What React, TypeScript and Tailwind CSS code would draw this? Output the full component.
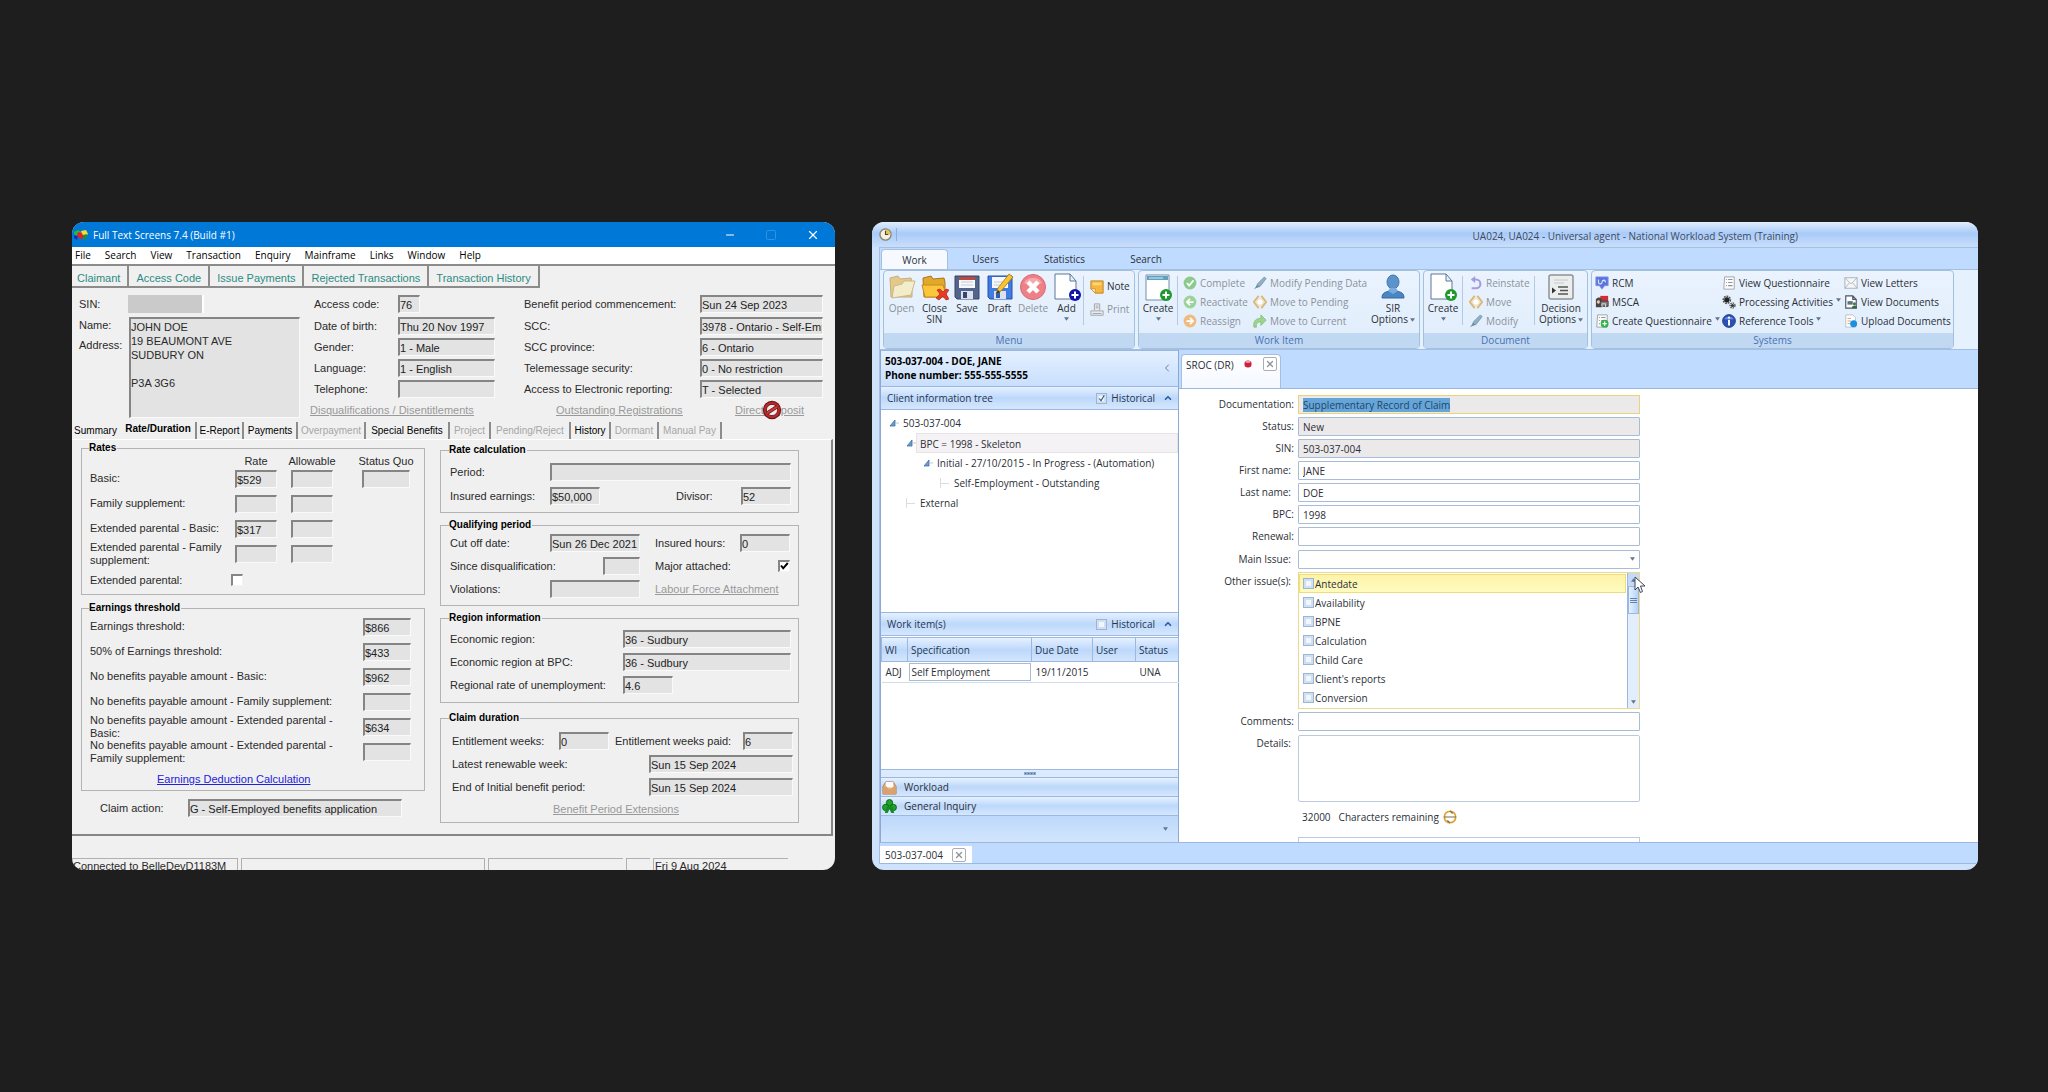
import type { ReactNode } from "react";
import clsx from "clsx";
import { ChevronLeft, ChevronUp, Minus, Square, X } from "lucide-react";

/* ---------- Full Text Screens ---------- */

type FieldProps = { id: string; value?: string; className?: string };

const Field = ({ id, value = "", className }: FieldProps) => (
  <input
    id={id}
    readOnly
    defaultValue={value}
    className={clsx(
      "h-[18px] shrink-0 border-t-2 border-l-2 border-r border-b border-t-[#858585] border-l-[#858585] border-r-[#fafafa] border-b-[#fafafa] bg-[#e3e3e3] pt-px text-[11px] text-[#222] outline-none",
      className,
    )}
  />
);

const Label = ({ id, children, className }: { id: string; children: ReactNode; className?: string }) => (
  <label htmlFor={id} className={clsx("shrink-0 whitespace-nowrap", className)}>
    {children}
  </label>
);

const Group = ({ title, children, className }: { title: string; children: ReactNode; className?: string }) => (
  <fieldset className={clsx("min-w-0 border border-[#b4b4b4]", className)}>
    <legend className="-ml-px pr-px text-[10px] leading-3 font-bold text-black">{title}</legend>
    {children}
  </fieldset>
);

const ClassicCheckbox = ({ id, checked = false, className }: { id: string; checked?: boolean; className?: string }) => (
  <span className={clsx("relative block size-3 shrink-0", className)}>
    <input
      id={id}
      type="checkbox"
      defaultChecked={checked}
      className="block size-3 appearance-none border-t-2 border-l-2 border-r border-b border-t-[#858585] border-l-[#858585] border-[#f4f4f4] bg-white"
    />
    {checked && (
      <svg viewBox="0 0 12 12" className="pointer-events-none absolute inset-0 size-3">
        <path d="M3 5.5l2.2 2.8L9.8 3" fill="none" stroke="#000" strokeWidth="2" />
      </svg>
    )}
  </span>
);

const menus = ["File", "Search", "View", "Transaction", "Enquiry", "Mainframe", "Links", "Window", "Help"];

const shortcuts = ["Claimant", "Access Code", "Issue Payments", "Rejected Transactions", "Transaction History"];

const claimTabs = [
  { name: "Summary", width: "w-[49px]" },
  { name: "Rate/Duration", width: "w-[76px]", active: true },
  { name: "E-Report", width: "w-[47px]" },
  { name: "Payments", width: "w-[54px]" },
  { name: "Overpayment", width: "w-[68px]", disabled: true },
  { name: "Special Benefits", width: "w-[84px]" },
  { name: "Project", width: "w-[41px]", disabled: true },
  { name: "Pending/Reject", width: "w-[80px]", disabled: true },
  { name: "History", width: "w-[40px]" },
  { name: "Dormant", width: "w-[48px]", disabled: true },
  { name: "Manual Pay", width: "w-[63px]", disabled: true },
];

const personal = [
  { id: "access", label: "Access code:", value: "76", width: "w-[22px]" },
  { id: "dob", label: "Date of birth:", value: "Thu 20 Nov 1997", width: "w-[97px]" },
  { id: "gender", label: "Gender:", value: "1 - Male", width: "w-[97px]" },
  { id: "language", label: "Language:", value: "1 - English", width: "w-[97px]" },
  { id: "phone", label: "Telephone:", value: "", width: "w-[97px]" },
];

const claim = [
  { id: "bpc", label: "Benefit period commencement:", value: "Sun 24 Sep 2023" },
  { id: "scc", label: "SCC:", value: "3978 - Ontario - Self-Employed" },
  { id: "sccprov", label: "SCC province:", value: "6 - Ontario" },
  { id: "tele", label: "Telemessage security:", value: "0 - No restriction" },
  { id: "aer", label: "Access to Electronic reporting:", value: "T - Selected" },
];

const rates = [
  { id: "basic", label: "Basic:", rate: "$529", quo: true },
  { id: "family", label: "Family supplement:", rate: "" },
  { id: "extbasic", label: "Extended parental - Basic:", rate: "$317" },
  { id: "extfamily", label: "Extended parental - Family supplement:", rate: "" },
];

const thresholds = [
  { id: "et", label: "Earnings threshold:", value: "$866" },
  { id: "et50", label: "50% of Earnings threshold:", value: "$433" },
  { id: "nbbasic", label: "No benefits payable amount - Basic:", value: "$962" },
  { id: "nbfamily", label: "No benefits payable amount - Family supplement:", value: "" },
  { id: "nbext", label: "No benefits payable amount - Extended parental - Basic:", value: "$634" },
  { id: "nbextfam", label: "No benefits payable amount - Extended parental - Family supplement:", value: "" },
];

const NoEntry = () => (
  <svg viewBox="0 0 20 20" className="absolute -top-[3px] left-[27px] size-5">
    <circle cx="10" cy="10" r="9.2" fill="#6f1518" />
    <circle cx="10" cy="10" r="8" fill="#b9292b" />
    <circle cx="10" cy="10" r="5.6" fill="#f1ebe9" stroke="#5d1012" strokeWidth=".8" />
    <path d="M5 13.2L15 6.8" stroke="#6c1214" strokeWidth="3.4" />
    <path d="M5 13.2L15 6.8" stroke="#c9383a" strokeWidth="2" />
  </svg>
);

const ClaimantDetails = () => (
  <section className="flex pt-[7px] pr-[12px] pl-[7px]">
    <div className="flex w-[221px] flex-col">
      <div className="flex h-[18px] items-center">
        <Label id="sin" className="w-[49px]">SIN:</Label>
        <input id="sin" readOnly className="h-[18px] w-[76px] border-r-2 border-r-white bg-[#cacaca] outline-none" />
      </div>
      <div className="mt-[4px] flex">
        <div className="w-[50px]">
          <Label id="address" className="block leading-[16px]">Name:</Label>
          <Label id="address" className="mt-[4px] block leading-[16px]">Address:</Label>
        </div>
        <textarea
          id="address"
          readOnly
          defaultValue={"JOHN DOE\n19 BEAUMONT AVE\nSUDBURY ON\n\nP3A 3G6"}
          className="block h-[101px] w-[171px] resize-none overflow-hidden border-t-2 border-l-2 border-r border-b border-t-[#858585] border-l-[#858585] border-[#fafafa] bg-[#e3e3e3] pt-px leading-[14px] outline-none"
        />
      </div>
    </div>
    <div className="ml-[10px] flex flex-1 flex-col">
      <div className="flex justify-between pl-1">
        <div className="flex flex-col gap-[3px]">
          {personal.map((f) => (
            <div key={f.id} className="flex items-center first:mb-px">
              <Label id={f.id} className="w-[84px]">{f.label}</Label>
              <Field id={f.id} value={f.value} className={f.width} />
            </div>
          ))}
        </div>
        <div className="flex flex-col gap-[3px]">
          {claim.map((f) => (
            <div key={f.id} className="flex items-center first:mb-px">
              <Label id={f.id} className="w-[176px]">{f.label}</Label>
              <Field id={f.id} value={f.value} className="w-[123px]" />
            </div>
          ))}
        </div>
      </div>
      <div className="mt-[5px] flex whitespace-nowrap text-[#999] underline">
        <a href="#" className="w-[246px]">Disqualifications / Disentitlements</a>
        <a href="#" className="w-[179px]">Outstanding Registrations</a>
        <span className="relative">
          <a href="#">Direct Deposit</a>
          <NoEntry />
        </span>
      </div>
    </div>
  </section>
);

const RatesGroup = () => (
  <Group title="Rates" className="pr-[14px] pb-px pl-2">
    <div className="grid h-3 grid-cols-[1fr_56px_71px_48px] items-center">
      <span />
      {["Rate", "Allowable"].map((h) => (
        <span key={h} className="flex w-[42px] justify-center whitespace-nowrap">{h}</span>
      ))}
      <span className="flex justify-center whitespace-nowrap">Status Quo</span>
    </div>
    {rates.map((r) => (
      <div key={r.id} className="grid h-[25px] grid-cols-[1fr_56px_71px_48px] items-center">
        <label htmlFor={r.id} className="leading-[13px]">{r.label}</label>
        <Field id={r.id} value={r.rate} className="w-[42px]" />
        <Field id={`${r.id}-allow`} className="w-[42px]" />
        {r.quo && <Field id={`${r.id}-quo`} className="w-[48px]" />}
      </div>
    ))}
    <div className="flex h-[27px] items-center">
      <Label id="extparental" className="w-[141px]">Extended parental:</Label>
      <ClassicCheckbox id="extparental" />
    </div>
  </Group>
);

const ThresholdGroup = () => (
  <Group title="Earnings threshold" className="mt-[7px] pr-[13px] pl-2">
    {thresholds.map((t) => (
      <div key={t.id} className="flex h-[25px] items-center justify-between">
        <label htmlFor={t.id} className="w-[255px] leading-[13px]">{t.label}</label>
        <Field id={t.id} value={t.value} className="w-[48px]" />
      </div>
    ))}
    <div className="flex h-[26px] items-center pt-1 pl-[67px]">
      <a href="#" className="text-[#2222dd] underline">Earnings Deduction Calculation</a>
    </div>
  </Group>
);

const RightGroups = () => (
  <div className="flex w-[359px] flex-col pt-[4px]">
    <Group title="Rate calculation" className="pt-[7px] pr-[7px] pb-[7px] pl-[9px]">
      <div className="flex items-center">
        <Label id="period" className="w-[100px]">Period:</Label>
        <Field id="period" className="w-[241px]" />
      </div>
      <div className="mt-[6px] flex items-center">
        <Label id="insearn" className="w-[100px]">Insured earnings:</Label>
        <Field id="insearn" value="$50,000" className="w-[50px]" />
        <Label id="divisor" className="ml-auto w-[65px]">Divisor:</Label>
        <Field id="divisor" value="52" className="w-[50px]" />
      </div>
    </Group>
    <Group title="Qualifying period" className="mt-[6px] pt-[3px] pr-[8px] pb-[7px] pl-[9px]">
      <div className="flex items-center">
        <Label id="cutoff" className="w-[100px]">Cut off date:</Label>
        <Field id="cutoff" value="Sun 26 Dec 2021" className="w-[90px]" />
        <Label id="inshours" className="ml-auto w-[85px]">Insured hours:</Label>
        <Field id="inshours" value="0" className="w-[50px]" />
      </div>
      <div className="mt-[5px] flex items-center">
        <Label id="since" className="w-[153px]">Since disqualification:</Label>
        <Field id="since" className="w-[37px]" />
        <Label id="major" className="ml-auto w-[123px]">Major attached:</Label>
        <ClassicCheckbox id="major" checked />
      </div>
      <div className="mt-[5px] flex items-center">
        <Label id="violations" className="w-[100px]">Violations:</Label>
        <Field id="violations" className="w-[90px]" />
        <a href="#" className="ml-auto w-[135px] whitespace-nowrap text-[#999] underline">Labour Force Attachment</a>
      </div>
    </Group>
    <Group title="Region information" className="mt-[6px] pt-[6px] pr-[7px] pb-[8px] pl-[9px]">
      <div className="flex items-center">
        <Label id="region" className="w-[173px]">Economic region:</Label>
        <Field id="region" value="36 - Sudbury" className="w-[168px]" />
      </div>
      <div className="mt-[5px] flex items-center">
        <Label id="regionbpc" className="w-[173px]">Economic region at BPC:</Label>
        <Field id="regionbpc" value="36 - Sudbury" className="w-[168px]" />
      </div>
      <div className="mt-[5px] flex items-center">
        <Label id="unemp" className="w-[173px]">Regional rate of unemployment:</Label>
        <Field id="unemp" value="4.6" className="w-[50px]" />
      </div>
    </Group>
    <Group title="Claim duration" className="mt-[9px] pt-[8px] pr-[5px] pb-[6px] pl-[9px]">
      <div className="flex items-center pl-[2px]">
        <Label id="entweeks" className="w-[107px]">Entitlement weeks:</Label>
        <Field id="entweeks" value="0" className="w-[50px]" />
        <Label id="entpaid" className="ml-auto w-[128px]">Entitlement weeks paid:</Label>
        <Field id="entpaid" value="6" className="w-[50px]" />
      </div>
      <div className="mt-[5px] flex items-center pl-[2px]">
        <Label id="latest" className="flex-1">Latest renewable week:</Label>
        <Field id="latest" value="Sun 15 Sep 2024" className="w-[144px]" />
      </div>
      <div className="mt-[5px] flex items-center pl-[2px]">
        <Label id="endinit" className="flex-1">End of Initial benefit period:</Label>
        <Field id="endinit" value="Sun 15 Sep 2024" className="w-[144px]" />
      </div>
      <a href="#" className="mt-[6px] ml-[103px] block leading-[14px] text-[#999] underline">
        Benefit Period Extensions
      </a>
    </Group>
  </div>
);

const FullTextScreens = () => (
  <section className="flex min-w-0 flex-[763] flex-col overflow-hidden rounded-xl bg-[#f0f0f0] font-['Liberation_Sans',Arial,sans-serif] text-[11px] leading-[14px] text-[#2a2a2a]">
    <header className="flex h-[25px] items-center bg-[#0078d7] pr-[15px] pl-px text-white">
      <svg viewBox="0 0 16 12" className="h-3 w-4">
        <path d="M1 3l4-2 3 2-2 4-4 1z" fill="#2ab83c" />
        <path d="M8 2l5-1 2 4-3 3-3-2z" fill="#f4e02e" />
        <path d="M5 3l4 1 2 5-4 1-3-4z" fill="#e3202b" />
        <path d="M10 6l4-1-1 5-3 1z" fill="#1c8f3a" />
        <path d="M1 6l4 1-1 4-3-2z" fill="#1a2fae" />
      </svg>
      <h1 className="ml-1 font-['Open_Sans',sans-serif] text-[10px]">Full Text Screens 7.4 (Build #1)</h1>
      <div className="ml-auto flex items-center gap-[29px]">
        <button aria-label="Minimize"><Minus className="size-3" strokeWidth={2} /></button>
        <button aria-label="Maximize"><Square className="size-3 text-[#2f92e2]" strokeWidth={2} /></button>
        <button aria-label="Close"><X className="size-[14px]" strokeWidth={2} /></button>
      </div>
    </header>
    <nav className="flex h-[19px] items-center gap-[14px] border-b-2 border-[#8c8c8c] bg-white pl-[3px] font-['Open_Sans',sans-serif] text-[10px] leading-[13px] text-black">
      {menus.map((m) => (
        <button key={m}>{m}</button>
      ))}
    </nav>
    <nav className="flex">
      {shortcuts.map((s) => (
        <button
          key={s}
          className="h-[22px] border-r-2 border-b-2 border-[#8c8c8c] px-[7px] pt-[3px] whitespace-nowrap text-[#2d8b84] first:pl-[5px]"
        >
          {s}
        </button>
      ))}
    </nav>
    <ClaimantDetails />
    <div className="mt-1 flex" role="tablist">
      {claimTabs.map((t) => (
        <button
          key={t.name}
          role="tab"
          aria-selected={Boolean(t.active)}
          className={clsx(
            "flex h-[17px] shrink-0 items-center justify-center border-r-2 text-[10px] whitespace-nowrap",
            t.width,
            t.name === "Summary" ? "border-[#f0f0f0]" : "border-[#8c8c8c]",
            t.active && "pb-1 font-bold",
            t.disabled ? "text-[#a6a6a6]" : "text-black",
          )}
        >
          {t.name}
        </button>
      ))}
    </div>
    <main className="mr-[2px] flex justify-between border-t border-r-2 border-b-2 border-t-white border-r-[#858585] border-b-[#858585] pr-[32px] pb-[11px] pl-[9px]">
      <div className="flex w-[344px] flex-col pt-[2px]">
        <RatesGroup />
        <ThresholdGroup />
        <div className="mt-2 flex items-center pl-[19px]">
          <Label id="claimaction" className="w-[88px]">Claim action:</Label>
          <Field id="claimaction" value="G - Self-Employed benefits application" className="w-[214px]" />
        </div>
      </div>
      <RightGroups />
    </main>
    <footer className="mt-auto flex h-3 gap-[3px] overflow-hidden whitespace-nowrap [&>span]:h-4 [&>span]:border-t [&>span]:border-l [&>span]:border-[#b0b0b0]">
      <span className="w-[166px] border-r border-r-white">Connected to BelleDevD1183M</span>
      <span className="w-[244px] border-r border-r-white" />
      <span className="w-[135px]" />
      <span className="w-[24px]" />
      <span className="w-[135px] pl-px">Fri 9 Aug 2024</span>
    </footer>
  </section>
);

/* ---------- National Workload System ---------- */

const glossy = "bg-linear-to-b from-[#e6f1ff] from-0% via-[#bdd8fb] via-50% to-[#d6e7fe]";

const Svg = ({ box = 16, className, children }: { box?: number; className?: string; children: ReactNode }) => (
  <svg viewBox={`0 0 ${box} ${box}`} className={clsx("shrink-0", className ?? "size-[14px]")} fill="none">
    {children}
  </svg>
);

const Folder = ({ open = false }: { open?: boolean }) => (
  <Svg box={28} className="size-7">
    <g opacity={open ? 0.55 : 1}>
      <path d="M2 5l8-2 2 3 11-1 1 4v15H3z" fill="#e0a92c" stroke="#a9771a" />
      {open ? (
        <path d="M6 13l8-2 2-3h11l-4 14-19 3z" fill="#fbe9a0" stroke="#b58a2c" />
      ) : (
        <path d="M1 12h21l4 12H4z" fill="#fbc53c" stroke="#c98a17" />
      )}
    </g>
    {!open && <path d="M16 17l3-1 3 3 3-3 3 1-3 4 3 5-3 1-3-4-4 4-3-2 4-4z" fill="#e8392b" stroke="#a3170f" strokeWidth=".6" />}
  </Svg>
);

const Floppy = ({ pencil = false }: { pencil?: boolean }) => (
  <Svg box={28} className="size-7">
    <path d="M2 3h24v23H4l-2-2z" fill={pencil ? "#3f7de0" : "#51648c"} stroke={pencil ? "#2451a8" : "#37466a"} />
    <path d="M6 4h16v11H6z" fill="#f6f8fb" />
    {!pencil && <path d="M6 4h16v3H6z" fill="#c2483e" />}
    <path d="M8 9h12M8 12h12" stroke="#c3cbd8" />
    <path d="M8 18h12v8H8z" fill="#dbe2ee" />
    <path d="M10 19h4v6h-4z" fill={pencil ? "#2c5dba" : "#37466a"} />
    {pencil && (
      <>
        <path d="M23 1l4 3-12 14-5 3 2-6z" fill="#f7c531" stroke="#a8730d" strokeWidth=".8" />
        <path d="M10 21l2-4 2 2z" fill="#333" />
      </>
    )}
  </Svg>
);

const Page = ({ badge, wide = false }: { badge: string; wide?: boolean }) => (
  <Svg box={28} className="size-7">
    {wide ? (
      <>
        <path d="M2 2h23v25H2z" fill="#fff" stroke="#6f8fae" />
        <path d="M3 3h21v4H3z" fill="#5fa0bd" />
        <path d="M5 5h14" stroke="#d4ecf4" />
      </>
    ) : (
      <path d="M2 1h15l6 7v18H2zM17 1v7h6" fill="#fff" stroke="#5d7794" />
    )}
    <circle cx="22" cy="22" r="6" fill={badge} />
    <path d="M22 18.500v7M18.500 22h7" stroke="#fff" strokeWidth="2" />
  </Svg>
);

const DeleteIcon = () => (
  <Svg box={28} className="size-7">
    <circle cx="14" cy="14" r="12.500" fill="#ee8087" stroke="#d56a73" />
    <path d="M5 10a10 9 0 0118 0 22 22 0 01-18 0z" fill="#f6a9ad" />
    <path d="M9 9l10 10M19 9L9 19" stroke="#fff" strokeWidth="4.500" />
  </Svg>
);

const UserIcon = () => (
  <Svg box={28} className="size-7">
    <ellipse cx="14" cy="9" rx="6" ry="7" fill="#5b93cb" stroke="#3f76af" />
    <path d="M3 25c0-5 3-6 8-7h6c5 1 8 2 8 7z" fill="#4a86c2" stroke="#37699f" />
    <path d="M9 18l5 3 5-3-2-3h-6z" fill="#79abdc" />
  </Svg>
);

const DecisionIcon = () => (
  <Svg box={28} className="size-7">
    <rect x="2" y="2" width="24" height="24" rx="2" fill="#eceded" stroke="#8f9296" strokeWidth="1.500" />
    <path d="M7 7h14M7 10h10" stroke="#c6c8cb" />
    <path d="M11 14h10M13 17.500h8M11 21h10" stroke="#555" strokeWidth="1.400" />
    <path d="M5 14.500l4 3-4 3z" fill="#333" />
  </Svg>
);

const Disc = ({ color, mark }: { color: string; mark: string }) => (
  <Svg>
    <circle cx="8" cy="8" r="7.300" fill={color} />
    <path d={mark} stroke="#fff" strokeWidth="2" />
  </Svg>
);

const Pen = () => (
  <Svg>
    <path d="M13 1l2 2-7 9-4 1 1-4z" fill="#8fb0c6" stroke="#6d8ba0" strokeWidth=".8" />
    <path d="M1 15l4-5 2 2z" fill="#6d8ba0" />
  </Svg>
);

const MoveIcon = () => (
  <Svg>
    <path d="M6.500 1L1 8l5.500 7M9.500 1L15 8l-5.500 7" stroke="#dcb877" strokeWidth="2.200" />
    <circle cx="8" cy="8" r="3.800" fill="#fff" stroke="#ead6b0" />
  </Svg>
);

const CurveArrow = () => (
  <Svg>
    <path d="M1 15C0 7 4 5 9 5V1l6 6-6 6V9C5 9 3 11 4 15z" fill="#9ed48c" stroke="#78b868" strokeWidth=".8" />
  </Svg>
);

const UndoIcon = () => (
  <Svg>
    <path d="M5 4h3a4.500 4.500 0 010 10H3" stroke="#a79be0" strokeWidth="2.400" />
    <path d="M7 0v8L2 4z" fill="#a79be0" />
  </Svg>
);

const NoteIcon = () => (
  <Svg>
    <path d="M1 1h14v14H6l-5-5z" fill="#f8b73c" stroke="#b97f1b" />
    <path d="M3 3h10v3H3z" fill="#fcd67e" />
    <path d="M1 10h5v5z" fill="#fff0c4" stroke="#b97f1b" strokeWidth=".7" />
  </Svg>
);

const PrintIcon = () => (
  <Svg>
    <path d="M5 8V1h6v7M1 9h14v5H1z" fill="#e9ebee" stroke="#9a9fa8" />
    <path d="M6.500 3.500h3M6.500 5.500h3M3 12h10" stroke="#9a9fa8" />
  </Svg>
);

const ListPage = ({ plus = false }: { plus?: boolean }) => (
  <Svg>
    <path d="M3 1h11v14H2z" fill="#fbfbfb" stroke="#9a9ea6" />
    <path d="M4.500 4h1M4.500 7.500h1M4.500 11h1M7 4h5M7 7.500h5M7 11h5" stroke="#8d929b" strokeWidth="1.200" />
    {plus && (
      <>
        <circle cx="11" cy="11" r="4.500" fill="#35b34a" />
        <path d="M11 8.500v5M8.500 11h5" stroke="#fff" strokeWidth="1.400" />
      </>
    )}
  </Svg>
);

const RcmIcon = () => (
  <Svg>
    <path d="M1 1h14v10h-4l-3 4-3-4H1z" fill="#5b74dc" stroke="#8496e6" />
    <path d="M4 4v3a2 2 0 004 0 2 2 0 014 0M10 4l2 3" stroke="#dfe6ff" strokeWidth="1.300" />
  </Svg>
);

const MscaIcon = () => (
  <Svg>
    <path d="M6 1h9v9H6z" fill="#cf2e33" />
    <path d="M1 5c2-3 5-3 7 0v9H1z" fill="#4c4543" />
    <circle cx="4" cy="8" r="2" fill="#e9c9b4" />
    <path d="M6 7h9v6H6z" fill="#7d7b80" stroke="#3b3a3e" />
    <path d="M8 15v-5h4v5" stroke="#ddd" />
  </Svg>
);

const GearsIcon = () => (
  <Svg>
    <circle cx="5.500" cy="5.500" r="4" stroke="#555" strokeWidth="2" strokeDasharray="2 1" />
    <circle cx="5.500" cy="5.500" r="3" fill="#222" />
    <circle cx="12" cy="12" r="2.800" stroke="#555" strokeWidth="1.600" strokeDasharray="1.600 1" />
    <circle cx="12" cy="12" r="1.800" fill="#333" />
  </Svg>
);

const InfoIcon = () => (
  <Svg>
    <circle cx="8" cy="8" r="7.300" fill="#2b50b4" stroke="#1d3a8c" />
    <path d="M2.500 6a6 5 0 0111 0z" fill="#6f8fe0" />
    <path d="M8 3v2M8 6.500V13" stroke="#fff" strokeWidth="2.200" />
  </Svg>
);

const LetterIcon = () => (
  <Svg>
    <path d="M1 2h14v12H1z" fill="#f4f6f8" stroke="#a4abb5" />
    <path d="M1 2l7 7 7-7M1 14l5-6M15 14l-5-6" stroke="#a9b0ba" />
  </Svg>
);

const ViewDocIcon = () => (
  <Svg>
    <path d="M2 1h8l4 4v10H2zM10 1v4h4" fill="#fff" stroke="#4b5563" strokeWidth="1.300" />
    <path d="M4 7h6v4H4z" fill="#5d7382" />
    <circle cx="12" cy="10" r="1.800" fill="#4f7355" />
    <path d="M9 15c0-4 6-4 6 0z" fill="#2f6b3c" />
  </Svg>
);

const UploadIcon = () => (
  <Svg>
    <path d="M2 1h8l3 3v11H2z" fill="#fff" stroke="#b3bac4" />
    <path d="M4 5h4M4 8h4M4 11h3" stroke="#c69a72" />
    <circle cx="11" cy="11" r="4" fill="#1d8fe0" />
  </Svg>
);

const Caret = ({ className }: { className?: string }) => (
  <svg viewBox="0 0 6 4" className={clsx("h-1 w-[5px] shrink-0", className)}>
    <path d="M0 0h6L3 4z" fill="#63758f" />
  </svg>
);

const BigButton = ({
  icon,
  lines,
  disabled = false,
  caret,
  width = "w-[33px]",
}: {
  icon: ReactNode;
  lines: string[];
  disabled?: boolean;
  caret?: "below" | "inline";
  width?: string;
}) => (
  <button
    disabled={disabled}
    className={clsx("flex shrink-0 flex-col items-center leading-[11px]", width, disabled && "text-[#8b929c]")}
  >
    {icon}
    {lines.map((l, i) => (
      <span key={l} className={clsx("flex items-center gap-[2px] whitespace-nowrap", i === 0 && "mt-[2px]")}>
        {l}
        {caret === "inline" && i === lines.length - 1 && <Caret />}
      </span>
    ))}
    {caret === "below" && <Caret className="mt-[3px]" />}
  </button>
);

type Small = { icon: ReactNode; text: string; caret?: boolean };

const SmallButtons = ({ items, disabled = false, className }: { items: Small[]; disabled?: boolean; className?: string }) => (
  <div className={clsx("flex shrink-0 flex-col", className)}>
    {items.map((b) => (
      <button
        key={b.text}
        disabled={disabled}
        className={clsx("flex h-[19px] items-center gap-[3px] whitespace-nowrap", disabled && "text-[#8b929c]")}
      >
        {b.icon}
        {b.text}
        {b.caret && <Caret className="mb-1" />}
      </button>
    ))}
  </div>
);

const Divider = () => <div className="mt-[3px] h-[49px] w-px shrink-0 bg-[#b3c9e4]" />;

const RibbonGroup = ({ title, width, children }: { title: string; width: string; children: ReactNode }) => (
  <section
    className={clsx(
      "flex h-[79px] flex-col rounded-sm border border-[#a4c0e0] bg-linear-to-b from-[#eaf3fe] to-[#e0edfc]",
      width,
    )}
  >
    <div className="flex flex-1 pt-[2px]">{children}</div>
    <h2 className="h-[15px] bg-[#c1d8f2] text-center leading-[15px] text-[#4a72b2]">{title}</h2>
  </section>
);

const Ribbon = () => (
  <div className="flex h-[81px] gap-[3px] border-y border-[#a4bfdf] bg-[#e6f1fe] pl-[3px]">
    <RibbonGroup title="Menu" width="w-[252px]">
      <div className="flex pl-px">
        <BigButton icon={<Folder open />} lines={["Open"]} disabled />
        <BigButton icon={<Folder />} lines={["Close", "SIN"]} />
        <BigButton icon={<Floppy />} lines={["Save"]} width="w-8" />
        <BigButton icon={<Floppy pencil />} lines={["Draft"]} />
        <BigButton icon={<DeleteIcon />} lines={["Delete"]} disabled width="w-[34px]" />
        <BigButton icon={<Page badge="#1212a8" />} lines={["Add"]} caret="below" />
      </div>
      <Divider />
      <div className="flex flex-col gap-2 pt-[6px] pl-[6px]">
        <button className="flex items-center gap-[3px] leading-[15px]"><NoteIcon />Note</button>
        <button disabled className="flex items-center gap-[3px] leading-[15px] text-[#8b929c]"><PrintIcon />Print</button>
      </div>
    </RibbonGroup>
    <RibbonGroup title="Work Item" width="w-[282px]">
      <BigButton icon={<Page badge="#1d9a2b" wide />} lines={["Create"]} caret="below" width="w-[38px]" />
      <Divider />
      <SmallButtons
        disabled
        className="w-[70px] pl-[5px]"
        items={[
          { icon: <Disc color="#8cc98c" mark="M4.500 8l2.500 3 5-6" />, text: "Complete" },
          { icon: <Disc color="#9bd39b" mark="M12 8H5M8 4.500L4.500 8 8 11.500" />, text: "Reactivate" },
          { icon: <Disc color="#f0bb80" mark="M4 8h7M8 4.500l3.500 3.500L8 11.500" />, text: "Reassign" },
        ]}
      />
      <SmallButtons
        disabled
        className="w-[118px] pl-[5px]"
        items={[
          { icon: <Pen />, text: "Modify Pending Data" },
          { icon: <MoveIcon />, text: "Move to Pending" },
          { icon: <CurveArrow />, text: "Move to Current" },
        ]}
      />
      <BigButton icon={<UserIcon />} lines={["SIR", "Options"]} caret="inline" width="w-[54px]" />
    </RibbonGroup>
    <RibbonGroup title="Document" width="w-[165px]">
      <BigButton icon={<Page badge="#1d9a2b" />} lines={["Create"]} caret="below" width="w-[38px]" />
      <Divider />
      <SmallButtons
        disabled
        className="w-[71px] pl-[6px]"
        items={[
          { icon: <UndoIcon />, text: "Reinstate" },
          { icon: <MoveIcon />, text: "Move" },
          { icon: <Pen />, text: "Modify" },
        ]}
      />
      <Divider />
      <BigButton icon={<DecisionIcon />} lines={["Decision", "Options"]} caret="inline" width="w-[52px]" />
    </RibbonGroup>
    <RibbonGroup title="Systems" width="w-[363px]">
      <SmallButtons
        className="w-[127px] pl-[3px]"
        items={[
          { icon: <RcmIcon />, text: "RCM" },
          { icon: <MscaIcon />, text: "MSCA" },
          { icon: <ListPage plus />, text: "Create Questionnaire", caret: true },
        ]}
      />
      <SmallButtons
        className="w-[121px] pl-[3px]"
        items={[
          { icon: <ListPage />, text: "View Questionnaire" },
          { icon: <GearsIcon />, text: "Processing Activities", caret: true },
          { icon: <InfoIcon />, text: "Reference Tools", caret: true },
        ]}
      />
      <SmallButtons
        className="pl-1"
        items={[
          { icon: <LetterIcon />, text: "View Letters" },
          { icon: <ViewDocIcon />, text: "View Documents" },
          { icon: <UploadIcon />, text: "Upload Documents" },
        ]}
      />
    </RibbonGroup>
  </div>
);

const BlueCheckbox = ({ id, checked = false }: { id: string; checked?: boolean }) => (
  <span className="relative block size-[11px] shrink-0">
    <input
      id={id}
      type="checkbox"
      defaultChecked={checked}
      className="block size-[11px] appearance-none border border-[#9fb4d0] bg-[#f2f7fd] shadow-[inset_0_0_0_2px_#cfe0f5]"
    />
    {checked && (
      <svg viewBox="0 0 12 12" className="pointer-events-none absolute inset-0 size-[11px]">
        <path d="M3.500 6l2 2.500 3.500-6" fill="none" stroke="#3b5680" strokeWidth="1.300" />
      </svg>
    )}
  </span>
);

const PanelHeader = ({ title, id, checked }: { title: string; id: string; checked?: boolean }) => (
  <div className={clsx("flex h-6 items-center border-y border-[#9ab8e0] pr-[5px] pl-[6px] text-[#26364f]", glossy)}>
    <h3>{title}</h3>
    <span className="ml-auto"><BlueCheckbox id={id} checked={checked} /></span>
    <label htmlFor={id} className="ml-1">Historical</label>
    <button aria-label={`Collapse ${title}`} className="ml-2"><ChevronUp className="size-[10px] text-[#2f5c9e]" strokeWidth={4} /></button>
  </div>
);

const Expander = () => (
  <svg viewBox="0 0 10 8" className="mr-1 h-2 w-[10px] shrink-0">
    <path d="M1 7L6 1v6z" fill="#6f9bc9" stroke="#3e6fa8" strokeWidth=".8" />
    <path d="M7 4h3" stroke="#b8c9dc" />
  </svg>
);

const tree = [
  { text: "503-037-004", indent: "pl-2", open: true },
  { text: "BPC = 1998 - Skeleton", indent: "pl-[25px]", open: true, selected: true },
  { text: "Initial - 27/10/2015 - In Progress - (Automation)", indent: "pl-[42px]", open: true },
  { text: "Self-Employment - Outstanding", indent: "pl-[59px]" },
  { text: "External", indent: "pl-[25px]" },
];

const Sidebar = () => (
  <aside className="flex w-[299px] shrink-0 flex-col border-x border-[#8ba9d2] bg-white">
    <div className="flex h-[36px] items-center justify-between border-t border-[#9ab8e0] bg-linear-to-b from-[#e4f0ff] to-[#c9dffc] pr-[5px] pb-px pl-1 leading-[14px] font-bold text-black">
      <div>
        <p>503-037-004 - DOE, JANE</p>
        <p>Phone number: 555-555-5555</p>
      </div>
      <button aria-label="Hide panel"><ChevronLeft className="size-3 text-[#5f7ea8]" strokeWidth={2} /></button>
    </div>
    <PanelHeader title="Client information tree" id="hist-tree" checked />
    <ul className="h-[202px] pt-[3px]">
      {tree.map((n) => (
        <li key={n.text} className={clsx("flex h-[20px] items-center", n.indent)}>
          {n.open ? <Expander /> : <span className="mr-[3px] h-[10px] w-[11px] shrink-0 border-l border-[#d8dde4] after:mt-[5px] after:block after:h-px after:w-2 after:bg-[#d8dde4]" />}
          <span className={clsx("h-5 flex-1 leading-[20px] whitespace-nowrap", n.selected && "-ml-[4px] border border-[#e6e4e6] bg-[#f4f2f4] pl-[3px] leading-[18px]")}>
            {n.text}
          </span>
        </li>
      ))}
    </ul>
    <PanelHeader title="Work item(s)" id="hist-work" />
    <table className="mt-px w-full table-fixed border-collapse text-left">
      <thead>
        <tr className={clsx("h-6 text-[#26364f]", glossy)}>
          {[
            ["WI", "w-[26px]"],
            ["Specification", "w-[124px]"],
            ["Due Date", "w-[61px]"],
            ["User", "w-[43px]"],
            ["Status", "w-[43px]"],
          ].map(([name, width]) => (
            <th key={name} className={clsx("border border-[#9ab8e0] pl-[3px] font-normal", width)}>{name}</th>
          ))}
        </tr>
      </thead>
      <tbody>
        <tr className="h-[21px] border-b border-[#cfdcea] whitespace-nowrap">
          <td className="pl-1">ADJ</td>
          <td className="px-px"><span className="block border border-[#a9bcd6] pl-[2px] leading-[16px]">Self Employment</span></td>
          <td className="pl-1">19/11/2015</td>
          <td />
          <td className="pl-1">UNA</td>
        </tr>
      </tbody>
    </table>
    <div className="flex-1" />
    <div className="flex h-2 items-center justify-center gap-[2px] border-t border-[#9ab8e0] bg-[#dceafd]">
      {[0, 1, 2, 3].map((d) => <i key={d} className="size-px bg-[#4e6a92] ring-1 ring-[#8fa8cc]" />)}
    </div>
    <button className={clsx("flex h-[19px] items-center border-t border-[#9ab8e0] pl-px", glossy)}>
      <Svg className="mr-[7px] size-[15px]">
        <path d="M1 7l3-5h8l3 5v8H1z" fill="#e8b27c" stroke="#a9805a" />
        <path d="M4 2h8v6H4z" fill="#fbfbfb" />
        <path d="M1 7h4l2 3h3l2-3h3v8H1z" fill="#d9a26c" />
      </Svg>
      Workload
    </button>
    <button className={clsx("flex h-[19px] items-center border-t border-[#9ab8e0] pl-px", glossy)}>
      <Svg className="mr-[7px] size-[15px]">
        <circle cx="8" cy="4" r="3.400" fill="#1fa32c" stroke="#0d6a18" />
        <circle cx="4" cy="9" r="3.400" fill="#1fa32c" stroke="#0d6a18" />
        <circle cx="12" cy="9" r="3.400" fill="#1fa32c" stroke="#0d6a18" />
        <path d="M3 15l2-7h6l2 7h-3l-2-4-2 4z" fill="#178a23" />
      </Svg>
      General Inquiry
    </button>
    <div className="flex h-[27px] items-center justify-end border-t border-[#9ab8e0] bg-linear-to-b from-[#bdd8fb] to-[#d3e5fd] pr-[10px]">
      <Caret />
    </div>
  </aside>
);

const CloseBox = () => (
  <button aria-label="Close tab" className="grid size-[14px] place-items-center rounded-[2px] border border-[#aaaeb4] bg-white">
    <X className="size-[10px] text-[#8d9096]" strokeWidth={3} />
  </button>
);

const fields = [
  { id: "f-status", label: "Status:", value: "New", locked: true },
  { id: "f-sin", label: "SIN:", value: "503-037-004", locked: true },
  { id: "f-first", label: "First name:", value: "JANE", inset: true },
  { id: "f-last", label: "Last name:", value: "DOE", inset: true },
  { id: "f-bpc", label: "BPC:", value: "1998" },
  { id: "f-renewal", label: "Renewal:", value: "" },
];

const issues = ["Antedate", "Availability", "BPNE", "Calculation", "Child Care", "Client's reports", "Conversion"];

const inputClass = "h-[19px] w-full rounded-[1px] border border-[#a9bcd6] px-1 outline-none";

const Row = ({ id, label, inset = false, children }: { id: string; label: string; inset?: boolean; children: ReactNode }) => (
  <div className="flex">
    <label htmlFor={id} className={clsx("w-[119px] shrink-0 text-right leading-[18px]", inset ? "pr-[7px]" : "pr-1")}>
      {label}
    </label>
    <div className="relative w-[342px]">{children}</div>
  </div>
);

const IssueList = () => (
  <div className="flex h-[137px] border border-[#ecd98a]">
    <ul className="flex-1 overflow-hidden pt-px pr-px">
      {issues.map((issue, i) => (
        <li
          key={issue}
          className={clsx(
            "flex h-[19px] items-center border pl-[3px]",
            i === 0 ? "border-[#efdc7a] bg-linear-to-b from-[#fdf3a9] to-[#fffbc0]" : "border-transparent",
          )}
        >
          <BlueCheckbox id={`issue-${i}`} />
          <label htmlFor={`issue-${i}`} className="pl-px">{issue}</label>
        </li>
      ))}
    </ul>
    <div className="flex w-3 flex-col items-center border-l border-[#9ab8e0] bg-[#e3eefc]">
      <button aria-label="Scroll up" className="grid h-[13px] w-full place-items-center bg-[#c5daf7]"><Caret className="rotate-180" /></button>
      <div className="flex h-[28px] w-full flex-col items-center justify-center gap-px border border-[#9ab8e0] bg-linear-to-r from-[#e6f1ff] to-[#b5d2f7]">
        <i className="h-px w-[7px] bg-[#6483ae]" />
        <i className="h-px w-[7px] bg-[#6483ae]" />
        <i className="h-px w-[7px] bg-[#6483ae]" />
      </div>
      <button aria-label="Scroll down" className="mt-auto mb-1"><Caret /></button>
    </div>
    <svg viewBox="0 0 12 18" className="absolute top-1 right-[-6px] h-[18px] w-3">
      <path d="M1 1v13l3-3 2.500 5.500 2-1L6.500 10H11z" fill="#fff" stroke="#3c4656" />
    </svg>
  </div>
);

const Form = () => (
  <form className="flex flex-1 flex-col gap-[3px] overflow-hidden border-t border-[#9ab8e0] bg-white pt-[6px]">
    <Row id="f-doc" label="Documentation:">
      <input
        id="f-doc"
        readOnly
        autoFocus
        onFocus={(e) => e.currentTarget.select()}
        defaultValue="Supplementary Record of Claim"
        className="h-[19px] w-full border border-[#ecd27a] bg-[#ebe9ea] px-1 outline-none selection:bg-[#66a5d8] selection:text-[#1f4568]"
      />
    </Row>
    {fields.map((f) => (
      <Row key={f.id} id={f.id} label={f.label} inset={f.inset}>
        <input id={f.id} readOnly={f.locked} defaultValue={f.value} className={clsx(inputClass, f.locked ? "bg-[#ebe9ea]" : "bg-white")} />
      </Row>
    ))}
    <div className="pt-px">
      <Row id="f-main" label="Main Issue:" inset>
        <select id="f-main" className={clsx(inputClass, "block appearance-none bg-white")}>
          <option value="" />
        </select>
        <Caret className="pointer-events-none absolute top-[7px] right-[5px]" />
      </Row>
    </div>
    <Row id="issue-0" label="Other issue(s):" inset>
      <IssueList />
    </Row>
    <Row id="f-comments" label="Comments:">
      <input id="f-comments" className={inputClass} />
    </Row>
    <Row id="f-details" label="Details:" inset>
      <textarea id="f-details" className="mt-px block h-[67px] w-full resize-none rounded-xs border border-[#bccadd] outline-none" />
    </Row>
    <div className="flex items-center pt-[5px] pl-[123px]">
      <span className="mr-2">32000</span>
      <span className="mr-[4px]">Characters remaining</span>
      <Svg>
        <circle cx="8" cy="8" r="6.500" fill="#fff" stroke="#e0a53a" strokeWidth="2" />
        <path d="M1 8h14M8 1l3 3M8 15l-3-3" stroke="#7a6a4d" strokeWidth="1.400" />
      </Svg>
    </div>
    <div className="mt-auto ml-[119px] h-[5px] w-[342px] border-x border-t border-[#bccadd]" />
  </form>
);

const WorkloadSystem = () => (
  <section className="flex min-w-0 flex-[1106] flex-col overflow-hidden rounded-xl bg-[#cfe2fb] font-['Open_Sans','Noto_Sans',sans-serif] text-[10px] leading-[14px] text-[#2b2f36]">
    <header className="flex h-[25px] items-center bg-linear-to-b from-[#e0edfe] via-[#a9cbf8] via-45% to-[#c9defb] pl-[7px]">
      <svg viewBox="0 0 14 14" className="size-[13px]">
        <circle cx="7" cy="7" r="6" fill="#f7f2dd" stroke="#8a8678" strokeWidth="1.500" />
        <path d="M7 1.500A5.500 5.500 0 0112.500 7H7z" fill="#e3c25e" />
        <path d="M7 3v4h3" fill="none" stroke="#444" strokeWidth="1.200" />
      </svg>
      <span className="ml-[4px] h-[13px] w-px bg-[#90afd6]" />
      <h1 className="mr-[180px] ml-auto pt-[3px] text-[#3d4a5e]">UA024, UA024 - Universal agent - National Workload System (Training)</h1>
    </header>
    <div className="ml-[7px] flex flex-1 flex-col border-t border-l border-[#a4bfdf] bg-[#bfdbff]">
      <nav className="flex h-[21px] items-end pl-px">
        {[
          ["Work", "w-[67px] bg-[#f6faff] border border-b-0 border-[#a4bfdf] rounded-t-sm"],
          ["Users", "w-[75px]"],
          ["Statistics", "w-[83px]"],
          ["Search", "w-[80px]"],
        ].map(([name, look]) => (
          <button key={name} className={clsx("h-5", look)}>{name}</button>
        ))}
      </nav>
      <Ribbon />
      <div className="flex flex-1">
        <Sidebar />
        <div className="flex min-w-0 flex-1 flex-col">
          <div className="flex h-[38px] items-end pl-[2px]">
            <div className="flex h-[34px] w-[100px] justify-between rounded-t-sm border border-b-0 border-[#a4bfdf] bg-linear-to-b from-white to-[#f4f8ff] pt-[2px] pr-[3px] pl-1">
              <button className="h-[15px]">SROC (DR)</button>
              <svg viewBox="0 0 10 10" className="mt-[3px] size-2">
                <circle cx="5" cy="5" r="4.500" fill="#cf1f3c" />
                <path d="M2 3.500a3 3 0 016 0z" fill="#f2a3ae" />
              </svg>
              <CloseBox />
            </div>
          </div>
          <Form />
        </div>
      </div>
      <div className="flex h-[22px] items-end border-y border-[#9ab8e0]">
        <div className="flex h-[17px] w-[92px] items-center justify-between bg-white pr-[6px] pl-[5px]">
          <button>503-037-004</button>
          <CloseBox />
        </div>
      </div>
    </div>
    <footer className="h-[6px]" />
  </section>
);

const App = () => (
  <div className="flex min-h-screen items-center bg-[#1e1e1e] pr-[70px] pl-[72px]">
    <div className="flex min-h-[648px] flex-1 items-stretch gap-[37px]">
      <FullTextScreens />
      <WorkloadSystem />
    </div>
  </div>
);

export default App;
